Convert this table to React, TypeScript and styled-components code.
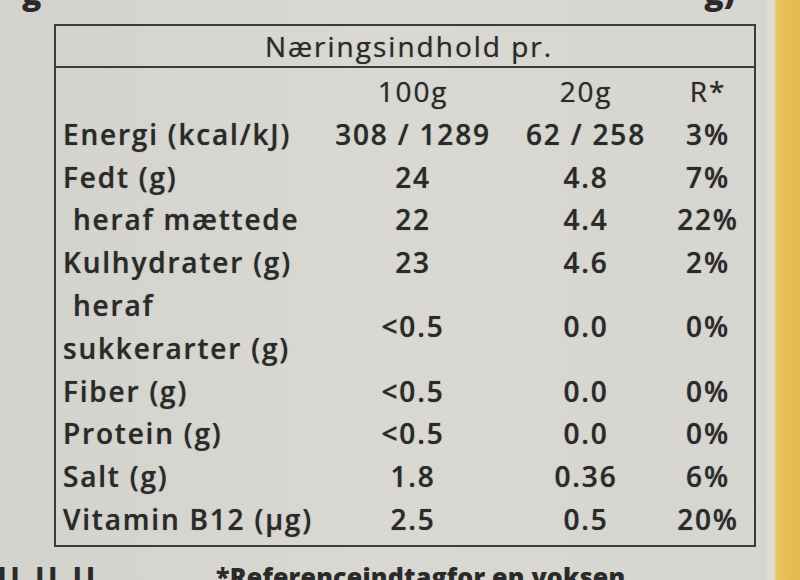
import React from "react";
import styled, { createGlobalStyle } from "styled-components";

const Global = createGlobalStyle`
  html, body { margin: 0; padding: 0; overflow: hidden; }
  body { background: #d6d5d0; }
  #root { width: 800px; height: 580px; overflow: hidden; }
`;

const Page = styled.div`
  display: flex;
  width: 800px;
  height: 580px;
  overflow: hidden;
  background: #d6d5d0;
  font-family: "Open Sans", "Liberation Sans", sans-serif;
  color: #2a2a2a;
`;

const Sheet = styled.div`
  flex: 1;
  display: flex;
  flex-direction: column;
  min-width: 0;
  background: linear-gradient(90deg, #d3d2cd 0%, #d9d8d3 50%, #d6d5d0 100%);
  & > * {
    flex-shrink: 0;
  }
`;

const Edge = styled.div`
  width: 35px;
  flex-shrink: 0;
  background: linear-gradient(
    90deg,
    #d8d7d1 0%,
    #e1ded4 20%,
    #e4dcc4 26%,
    #e8c86c 32%,
    #e6bd55 60%,
    #e3b94f 100%
  );
`;

const TopClip = styled.div`
  height: 24px;
  display: flex;
  justify-content: space-between;
  overflow: hidden;
  padding: 0 30px 0 22px;
`;

const Clipped = styled.span`
  font-size: 32px;
  font-weight: 800;
  line-height: 32px;
  margin-top: -24px;
  color: #2a2a2a;
`;

const Table = styled.div`
  margin-left: 54px;
  width: 702px;
  box-sizing: border-box;
  border: 2px solid #3c3c3a;
  text-shadow: 0 0 1px rgba(30, 30, 30, 0.55);
`;

const Title = styled.div`
  height: 40px;
  border-bottom: 2px solid #3c3c3a;
  display: flex;
  align-items: center;
  justify-content: center;
  font-size: 28px;
  font-weight: 500;
  letter-spacing: 2px;
  padding-left: 8px;
`;

const Grid = styled.div`
  display: grid;
  grid-template-columns: 274px 166px 180px 64px;
  padding: 2px 14px 4px 0;
  font-size: 28px;
  font-weight: 600;
  letter-spacing: 1.8px;
  line-height: 42.8px;
`;

const Label = styled.div<{ $indent?: boolean }>`
  padding-left: ${(p) => (p.$indent ? "17px" : "7px")};
  white-space: nowrap;
`;

const SubLine = styled.div<{ $indent?: boolean }>`
  padding-left: ${(p) => (p.$indent ? "10px" : "0")};
`;

const Value = styled.div`
  display: flex;
  align-items: center;
  justify-content: center;
  white-space: nowrap;
`;

const HeadValue = styled(Value)`
  font-weight: 500;
`;

const Footer = styled.div`
  display: flex;
  align-items: flex-start;
  margin-top: 14px;
  font-size: 25px;
  font-weight: 800;
  line-height: 30px;
  color: #2a2a2a;
`;

const Bars = styled.span`
  width: 218px;
  letter-spacing: 5px;
  margin-left: -2px;
`;

const Note = styled.span`
  letter-spacing: 0.2px;
`;

type Row = { label: string[]; indent?: boolean; v: [string, string, string] };

const rows: Row[] = [
  { label: ["Energi (kcal/kJ)"], v: ["308 / 1289", "62 / 258", "3%"] },
  { label: ["Fedt (g)"], v: ["24", "4.8", "7%"] },
  { label: ["heraf mættede"], indent: true, v: ["22", "4.4", "22%"] },
  { label: ["Kulhydrater (g)"], v: ["23", "4.6", "2%"] },
  { label: ["heraf", "sukkerarter (g)"], v: ["<0.5", "0.0", "0%"] },
  { label: ["Fiber (g)"], v: ["<0.5", "0.0", "0%"] },
  { label: ["Protein (g)"], v: ["<0.5", "0.0", "0%"] },
  { label: ["Salt (g)"], v: ["1.8", "0.36", "6%"] },
  { label: ["Vitamin B12 (µg)"], v: ["2.5", "0.5", "20%"] },
];

export default function App() {
  return (
    <>
      <Global />
      <Page>
        <Sheet>
          <TopClip>
            <Clipped>g</Clipped>
            <Clipped>g)</Clipped>
          </TopClip>
          <Table>
            <Title>Næringsindhold pr.</Title>
            <Grid>
              <div />
              <HeadValue>100g</HeadValue>
              <HeadValue>20g</HeadValue>
              <HeadValue>R*</HeadValue>
              {rows.map((r, i) => (
                <React.Fragment key={i}>
                  {r.label.length > 1 ? (
                    <Label>
                      <SubLine $indent>{r.label[0]}</SubLine>
                      <SubLine>{r.label[1]}</SubLine>
                    </Label>
                  ) : (
                    <Label $indent={r.indent}>{r.label[0]}</Label>
                  )}
                  <Value>{r.v[0]}</Value>
                  <Value>{r.v[1]}</Value>
                  <Value>{r.v[2]}</Value>
                </React.Fragment>
              ))}
            </Grid>
          </Table>
          <Footer>
            <Bars>ll ll ll</Bars>
            <Note>*Referenceindtagfor en voksen</Note>
          </Footer>
        </Sheet>
        <Edge />
      </Page>
    </>
  );
}
